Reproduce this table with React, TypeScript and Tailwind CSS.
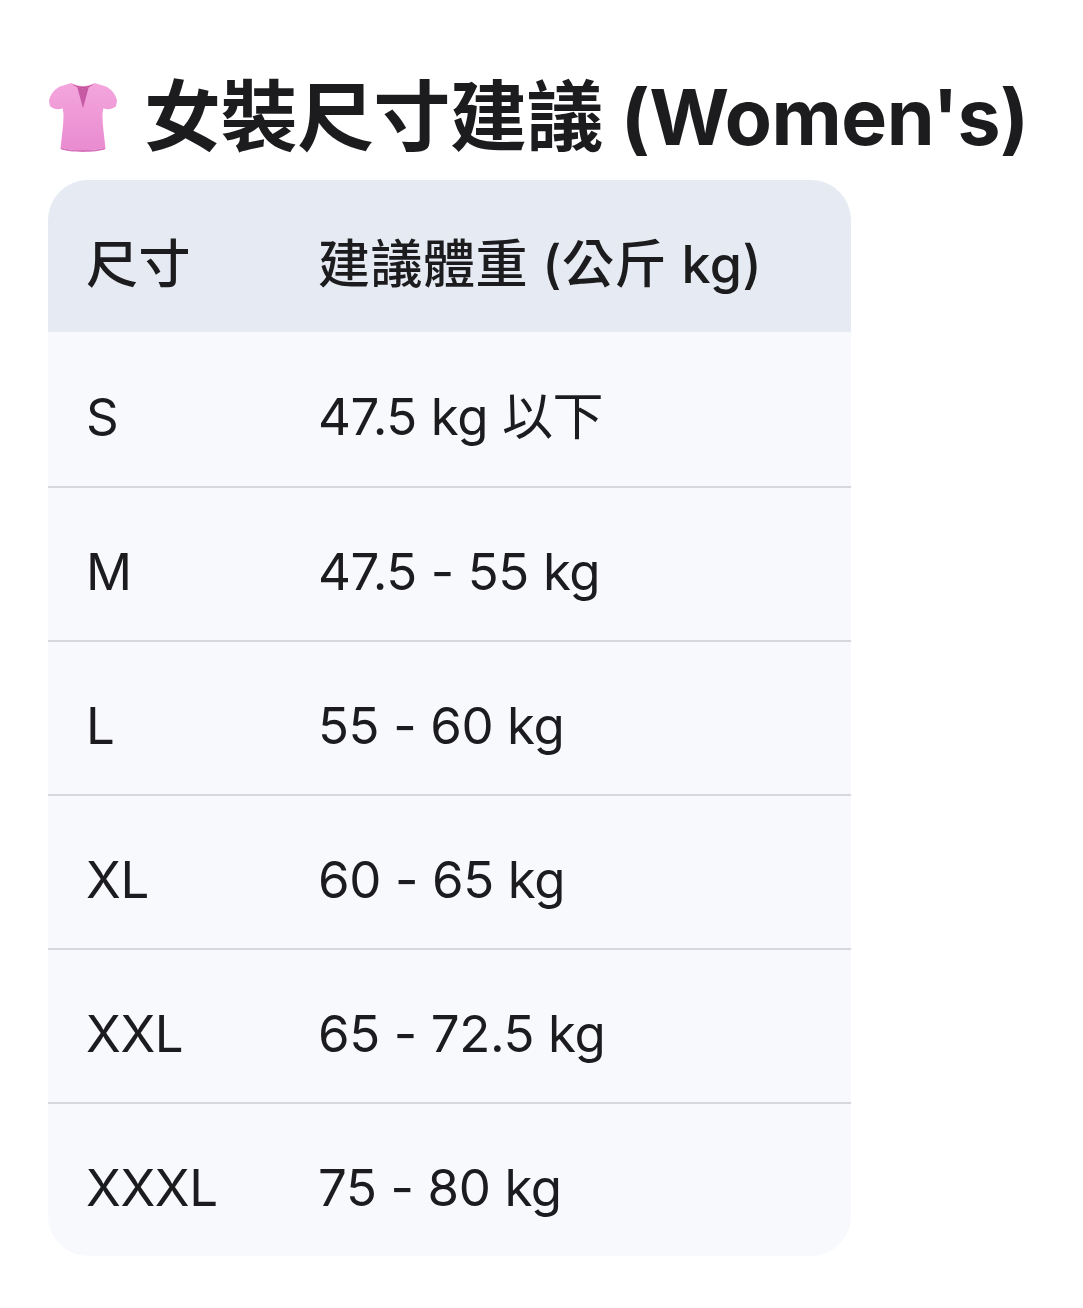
import React from 'react';

const rows = [
  { size: 'S', weight: '47.5 kg 以下' },
  { size: 'M', weight: '47.5 - 55 kg' },
  { size: 'L', weight: '55 - 60 kg' },
  { size: 'XL', weight: '60 - 65 kg' },
  { size: 'XXL', weight: '65 - 72.5 kg' },
  { size: 'XXXL', weight: '75 - 80 kg' },
];

const font = { fontFamily: 'Inter, "Noto Sans CJK TC", sans-serif' };

const Blouse = () => (
  <svg width="70" height="78" viewBox="0 0 72 78">
    <defs>
      <linearGradient id="shirt" x1="0" y1="0" x2="0" y2="1">
        <stop offset="0" stopColor="#f4a6dc" />
        <stop offset="1" stopColor="#e98bd0" />
      </linearGradient>
    </defs>
    <path
      d="M24 4 L14 7 C8 9 3 14 1 22 L2 28 C6 31 11 32 15 30 L16 36 C16 48 14 60 13 70 C22 74 50 74 59 70 C58 60 56 48 56 36 L57 30 C61 32 66 31 70 28 L71 22 C69 14 64 9 58 7 L48 4 C44 6 40 7 36 7 C32 7 28 6 24 4 Z"
      fill="url(#shirt)"
    />
    <path d="M24 4 C28 8 32 9 36 9 C40 9 44 8 48 4 C46 6 41 8 36 8 C31 8 26 6 24 4 Z" fill="#b5357f" />
    <path d="M30 8 L36 30 L42 8 C40 9 38 9.5 36 9.5 C34 9.5 32 9 30 8 Z" fill="#c75aa4" />
    <path d="M13 70 C22 74 50 74 59 70 L59 72 C50 76 22 76 13 72 Z" fill="#d872bd" />
  </svg>
);

export default function App() {
  return (
    <div className="min-h-screen bg-white text-[#1c1c1e]" style={font}>
      <div className="pl-[48px] pt-[72px]">
        <h1 className="flex items-center gap-[26px] text-[77px] font-bold leading-[90px] tracking-[-0.5px]">
          <Blouse />
          <span>女裝尺寸建議 (Women's)</span>
        </h1>
        <div className="mt-[18px] w-[803px] overflow-hidden rounded-[40px] bg-[#f8f9fd]">
          <div className="flex h-[152px] items-center bg-[#e5eaf3] pt-[18px] text-[52px] font-medium tracking-[0.5px]">
            <div className="w-[270px] pl-[38px]">尺寸</div>
            <div>建議體重 (公斤 kg)</div>
          </div>
          {rows.map((row, i) => (
            <div
              key={row.size}
              className={
                i > 0
                  ? 'flex h-[154px] items-center border-t-2 border-[#d5d7dc] pt-[16px] text-[51px] tracking-[-0.4px]'
                  : 'flex h-[154px] items-center pt-[16px] text-[51px] tracking-[-0.4px]'
              }
            >
              <div className="w-[270px] pl-[38px]">{row.size}</div>
              <div>{row.weight}</div>
            </div>
          ))}
        </div>
      </div>
    </div>
  );
}
